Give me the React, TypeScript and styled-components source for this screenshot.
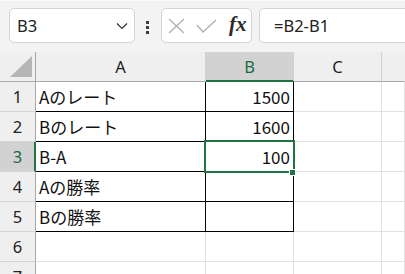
import React from "react";
import styled, { createGlobalStyle, css } from "styled-components";

const Global = createGlobalStyle`
  html, body { margin: 0; padding: 0; background: #f3f3f3; }
  #root { width: 405px; height: 274px; }
`;

const Root = styled.div`
  width: 405px;
  height: 274px;
  overflow: hidden;
  background: #f3f3f3;
  font-family: "Noto Sans CJK JP", "Noto Sans", sans-serif;
`;

const Toolbar = styled.div`
  display: flex;
  align-items: flex-start;
  height: 52px;
  box-sizing: border-box;
  padding: 8px 0 0 9px;
  border-top: 1px solid #fbfbfb;
`;

const NameBox = styled.div`
  box-sizing: border-box;
  flex: none;
  width: 126px;
  height: 35px;
  margin-top: -1px;
  display: flex;
  align-items: center;
  justify-content: space-between;
  padding: 0 6px 0 7px;
  background: #fff;
  border: 1px solid #d4d4d4;
  border-radius: 5px;
  font-family: "Noto Sans", "Open Sans", sans-serif;
  font-size: 16.5px;
  color: #222;
`;

const Dots = styled.div`
  flex: none;
  display: flex;
  flex-direction: column;
  gap: 2px;
  margin: 12px 12px 0 11px;
  & > span {
    width: 3px;
    height: 3px;
    background: #3c3c3c;
  }
`;

const FxBox = styled.div`
  box-sizing: border-box;
  flex: none;
  width: 91px;
  height: 35px;
  margin-top: -1px;
  display: flex;
  align-items: center;
  padding-left: 6px;
  gap: 11px;
  background: #fff;
  border: 1px solid #d4d4d4;
  border-radius: 5px;
`;

const FxText = styled.span`
  font-family: "Liberation Serif", "DejaVu Serif", serif;
  font-style: italic;
  font-weight: 600;
  font-size: 21px;
  color: #2a2a2a;
  margin-left: 1px;
  margin-top: -2px;
`;

const FormulaBox = styled.div`
  box-sizing: border-box;
  flex: none;
  width: 200px;
  height: 35px;
  margin: -1px 0 0 7px;
  display: flex;
  align-items: center;
  padding-left: 14px;
  background: #fff;
  border: 1px solid #d4d4d4;
  border-radius: 5px;
  font-family: "Noto Sans", "Open Sans", sans-serif;
  font-size: 16.5px;
  color: #222;
`;

const Grid = styled.div`
  position: relative;
  display: grid;
  grid-template-columns: 36px 170px 88px 88px 1fr;
  grid-auto-rows: 30px;
  background: #fff;
`;

type HeadProps = { $sel?: boolean; $last?: boolean };

const ColHead = styled.div<HeadProps>`
  box-sizing: border-box;
  display: flex;
  align-items: center;
  justify-content: center;
  background: ${(p) => (p.$sel ? "#d2d2d2" : "#efefef")};
  color: ${(p) => (p.$sel ? "#1d6b40" : "#222")};
  border-right: 1px solid ${(p) => (p.$last ? "transparent" : "#d0d0d0")};
  border-bottom: ${(p) => (p.$sel ? "2px solid #217346" : "1px solid #a8a8a8")};
  font-family: "Noto Sans", "Open Sans", sans-serif;
  font-size: 16.5px;
  padding-top: ${(p) => (p.$sel ? "1px" : "0")};
`;

const Corner = styled.div`
  box-sizing: border-box;
  position: relative;
  background: #efefef;
  border-right: 1px solid #a8a8a8;
  border-bottom: 1px solid #a8a8a8;
  display: flex;
  align-items: flex-end;
  justify-content: flex-end;
  padding: 0 3px 4px 0;
`;

const RowHead = styled.div<HeadProps>`
  box-sizing: border-box;
  display: flex;
  align-items: center;
  justify-content: center;
  background: ${(p) => (p.$sel ? "#d2d2d2" : "#efefef")};
  color: ${(p) => (p.$sel ? "#1d6b40" : "#222")};
  border-right: ${(p) => (p.$sel ? "2px solid #217346" : "1px solid #a8a8a8")};
  border-bottom: 1px solid #d4d4d4;
  font-family: "Noto Sans", "Open Sans", sans-serif;
  font-size: 16.5px;
  padding-left: ${(p) => (p.$sel ? "1px" : "0")};
`;

type CellProps = { $boxed?: boolean; $num?: boolean };

const Cell = styled.div<CellProps>`
  box-sizing: border-box;
  display: flex;
  align-items: center;
  justify-content: ${(p) => (p.$num ? "flex-end" : "flex-start")};
  padding: 0 ${(p) => (p.$num ? "3px" : "0")} 1px ${(p) => (p.$num ? "0" : "3px")};
  font-size: 17px;
  color: #111;
  white-space: nowrap;
  border-right: 1px solid #e1e1e1;
  border-bottom: 1px solid #e1e1e1;
  ${(p) =>
    p.$boxed &&
    css`
      border-right-color: #000;
      border-bottom-color: #000;
    `}
`;

const Selection = styled.div`
  position: absolute;
  left: 204px;
  top: 88px;
  width: 91px;
  height: 33px;
  box-sizing: border-box;
  border: 2px solid #217346;
  pointer-events: none;
`;

const FillHandle = styled.div`
  position: absolute;
  left: 289px;
  top: 117px;
  width: 7px;
  height: 7px;
  box-sizing: border-box;
  background: #217346;
  border: 1px solid #fff;
`;

const Chevron = () => (
  <svg width="12" height="8" viewBox="0 0 12 8">
    <polyline points="1,1.5 6,6.5 11,1.5" fill="none" stroke="#333" strokeWidth="1.2" />
  </svg>
);

const Cross = () => (
  <svg width="17" height="16" viewBox="0 0 17 16">
    <path d="M1 1 L16 15 M16 1 L1 15" stroke="#b0b0b0" strokeWidth="1.3" fill="none" />
  </svg>
);

const Check = () => (
  <svg width="21" height="14" viewBox="0 0 21 14">
    <polyline points="1,6 7,13 20,1" fill="none" stroke="#b0b0b0" strokeWidth="1.3" />
  </svg>
);

const Triangle = () => (
  <svg width="22" height="21" viewBox="0 0 22 21">
    <polygon points="22,0 22,21 0,21" fill="#b6b6b6" />
  </svg>
);

type Row = { n: number; a: string; b: string; boxed: boolean };

const rows: Row[] = [
  { n: 1, a: "Aのレート", b: "1500", boxed: true },
  { n: 2, a: "Bのレート", b: "1600", boxed: true },
  { n: 3, a: "B-A", b: "100", boxed: true },
  { n: 4, a: "Aの勝率", b: "", boxed: true },
  { n: 5, a: "Bの勝率", b: "", boxed: true },
  { n: 6, a: "", b: "", boxed: false },
  { n: 7, a: "", b: "", boxed: false },
];

export default function App() {
  return (
    <Root>
      <Global />
      <Toolbar>
        <NameBox>
          <span>B3</span>
          <Chevron />
        </NameBox>
        <Dots>
          <span />
          <span />
          <span />
        </Dots>
        <FxBox>
          <Cross />
          <Check />
          <FxText>fx</FxText>
        </FxBox>
        <FormulaBox>=B2-B1</FormulaBox>
      </Toolbar>
      <Grid>
        <Corner>
          <Triangle />
        </Corner>
        <ColHead>A</ColHead>
        <ColHead $sel>B</ColHead>
        <ColHead>C</ColHead>
        <ColHead $last />
        {rows.map((r) => (
          <React.Fragment key={r.n}>
            <RowHead $sel={r.n === 3}>{r.n}</RowHead>
            <Cell $boxed={r.boxed}>{r.a}</Cell>
            <Cell $boxed={r.boxed} $num>
              {r.b}
            </Cell>
            <Cell />
            <Cell />
          </React.Fragment>
        ))}
        <Selection />
        <FillHandle />
      </Grid>
    </Root>
  );
}
